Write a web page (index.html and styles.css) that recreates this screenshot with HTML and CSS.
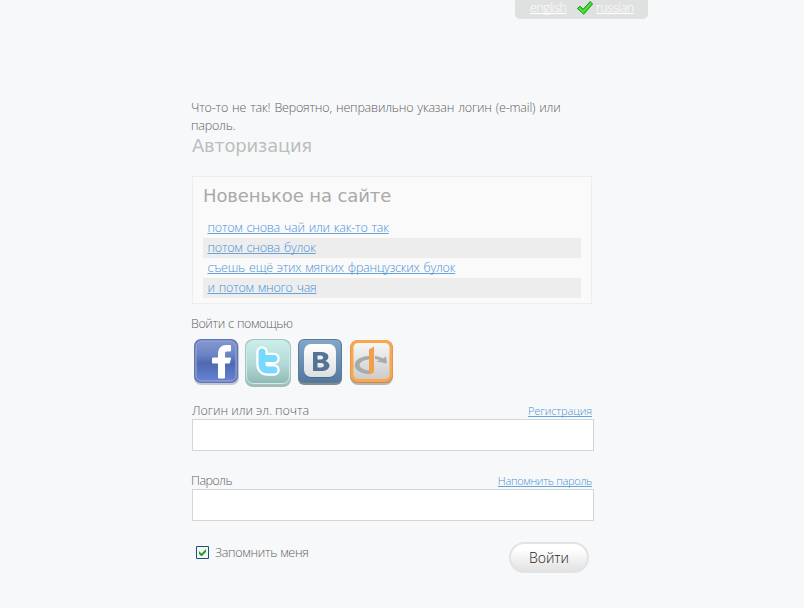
FILE: index.html
```html
<!DOCTYPE html>
<html lang="ru">
<head>
<meta charset="utf-8">
<title>Авторизация</title>
<link rel="stylesheet" href="styles.css">
</head>
<body>
<nav class="languages">
  <a href="#">english</a>
  <svg class="tick" width="18" height="16" viewBox="0 0 18 16"><path d="M1.3 8.5 4 6.2l3.2 3L14.2 1.5 16.6 4 7.8 14.2z" fill="#34d421" stroke="#279d28" stroke-width="1" stroke-linejoin="round"/><path d="M3 8.3l4.2 3.6L14.6 3.5" fill="none" stroke="#70ed4b" stroke-width="1"/></svg>
  <a href="#" class="russian">russian</a>
</nav>
<main class="login">
  <p class="message"><span class="message-line">Что-то не так! Вероятно, неправильно указан логин (e-mail) или</span> пароль.</p>
  <h1>Авторизация</h1>
  <section class="news">
    <h2>Новенькое на сайте</h2>
    <ul>
      <li><a href="#">потом снова чай или как-то так</a></li>
      <li><a href="#">потом снова булок</a></li>
      <li><a href="#">съешь ещё этих мягких французских булок</a></li>
      <li><a href="#">и потом много чая</a></li>
    </ul>
  </section>
  <p class="social-title"><span>Войти с помощью</span></p>
  <div class="social">
    <svg width="48" height="50" viewBox="0 0 48 50">
      <defs><linearGradient id="fb" x2="0" y2="1"><stop stop-color="#8297d0"/><stop offset=".35" stop-color="#6c83c4"/><stop offset=".55" stop-color="#4f68b1"/><stop offset="1" stop-color="#6583d2"/></linearGradient></defs>
      <rect x="2" y="3" width="45" height="45" rx="7" fill="#c4c8d2"/>
      <rect x="2" y="2" width="44" height="44" rx="7" fill="#6076b3"/>
      <rect x="4" y="4" width="40" height="40" rx="5.500" fill="url(#fb)" stroke="#a0b0dc"/>
      <path d="M26.500 41V26h-6v-5h6v-4c0-6 3-8.500 8-8.500h4V14h-3c-2 0-3 1-3 3v4h6l-1 5h-5v15z" fill="#fff" stroke="#fff"/>
    </svg>
    <svg width="48" height="50" viewBox="0 0 48 50">
      <defs><linearGradient id="tw" x2="0" y2="1"><stop stop-color="#cceeeb"/><stop offset=".55" stop-color="#b2d9d5"/><stop offset="1" stop-color="#91b9b4"/></linearGradient></defs>
      <rect x="1" y="4" width="46" height="46" rx="8" fill="#a6b8b8"/>
      <rect x="1" y="2" width="46" height="46" rx="8" fill="#a1c6c2"/>
      <rect x="2.5" y="3.5" width="43" height="43" rx="7" fill="url(#tw)" stroke="#d0ebe9"/>
      <path d="M18 15v12q0 6 6 6h6M18 21.500h12" fill="none" stroke="#fff" stroke-width="11.500" stroke-linecap="round" stroke-linejoin="round"/>
      <path d="M18 15v12q0 6 6 6h6M18 21.500h12" fill="none" stroke="#78d9ff" stroke-width="7" stroke-linecap="round" stroke-linejoin="round"/>
    </svg>
    <svg width="48" height="50" viewBox="0 0 48 50">
      <defs><linearGradient id="vk" x2="0" y2="1"><stop stop-color="#84a7c8"/><stop offset="1" stop-color="#53779e"/></linearGradient><linearGradient id="pale" x2="0" y2="1"><stop stop-color="#fff"/><stop offset="1" stop-color="#dedfe1"/></linearGradient></defs>
      <rect x="2" y="4" width="44" height="44" rx="6" fill="#858b92"/>
      <rect x="2" y="2" width="44" height="44" rx="6" fill="#5b7998"/>
      <rect x="3" y="3" width="42" height="42" rx="5" fill="url(#vk)"/>
      <rect x="8" y="8" width="32" height="33" rx="7" fill="#49698e"/>
      <rect x="8" y="7" width="32" height="33" rx="7" fill="url(#pale)"/>
      <path d="M17 15h8c9 0 9 7 4.500 9 6.500 2 5 10-3.500 10h-9zM21.500 18.500v4h3c3.500 0 3.500-4 0-4zM21.500 26v4.500h3.500c4 0 4-4.500 0-4.500z" fill="#537497" fill-rule="evenodd"/>
    </svg>
    <svg width="48" height="50" viewBox="0 0 48 50">
      <defs><linearGradient id="oid" x2="0" y2="1"><stop stop-color="#f8f8f8"/><stop offset="1" stop-color="#c9cac9"/></linearGradient></defs>
      <rect x="2" y="4" width="43" height="44" rx="8" fill="#b9b5af"/>
      <rect x="2" y="3" width="43" height="43" rx="8" fill="#c98b51"/>
      <rect x="4" y="4.500" width="39" height="39" rx="6" fill="url(#oid)" stroke="#f9a64e" stroke-width="3"/>
      <path d="M21 19C2 20 2 36 21 37v-3.500C8 32 9 23.500 21 22.500zM27 19q5 .5 8 2.500l3-2 1 7-11-2 4-1.500-5-1z" fill="#a8abab"/>
      <path d="M21 12.500l5-3v26l-5 2z" fill="#f49e4c"/>
    </svg>
  </div>
  <form>
    <div class="field">
      <div class="field-head"><label for="login" class="l1">Логин или эл. почта</label><a href="#" class="f1">Регистрация</a></div>
      <input id="login" type="text">
    </div>
    <div class="field">
      <div class="field-head"><label for="password" class="l2">Пароль</label><a href="#" class="f2">Напомнить пароль</a></div>
      <input id="password" type="password">
    </div>
    <div class="actions">
      <label class="remember"><svg width="13" height="13" viewBox="0 0 13 13"><path d="M.5.5h12v12H.5z" fill="#f5f6f3" stroke="#1c5180"/><path d="M3 5v3l2 2h1l4-4V3L5.500 7.500z" fill="#21a121"/></svg><span>Запомнить меня</span></label>
      <button type="button"><span>Войти</span></button>
    </div>
  </form>
</main>
</body>
</html>
```
FILE: styles.css
```css
* { box-sizing: border-box; }
body { margin: 0; height: 608px; overflow: hidden; background: #f7f8fa; color: #626262; font: 300 12.5px/18px "Open Sans", "Noto Sans", sans-serif; }
h1, h2, p, ul { margin: 0; padding: 0; }
a { color: #4a93d6; text-decoration: underline #69a5dc 1px; text-underline-offset: 1px; text-decoration-skip-ink: none; white-space: nowrap; }
.languages { width: 133px; height: 19px; margin-left: 515px; padding-left: 15px; display: flex; background: #dfe0e0; border-radius: 0 0 5px 5px; line-height: 16px; }
.languages a { color: #fff; text-decoration-color: #fff; width: 37px; letter-spacing: -.45px; }
.tick { margin: 0 2px 0 9px; flex: none; }
.login { width: 402px; margin: 80px 0 0 192px; }
.message { height: 36px; margin-left: -1px; white-space: nowrap; letter-spacing: -.2px; word-spacing: 1px; }
.message-line { display: block; }
h1, h2 { font: 18px/22px "DejaVu Sans", sans-serif; white-space: nowrap; }
h1 { height: 22px; color: #bcbebd; letter-spacing: -.28px; }
.news { width: 400px; height: 128px; margin-top: 19px; padding: 8px 10px 0; background: #fafafa; border: 1px solid #ededee; }
h2 { color: #a9a9a9; letter-spacing: -.1px; }
.news ul { list-style: none; margin-top: 11px; }
.news li { height: 20px; line-height: 20px; padding-left: 4.5px; letter-spacing: -.23px; word-spacing: 1px; }
.news li:nth-child(even) { background: #ededed; }
.social-title { height: 18px; margin: 11px 0 4px -1px; letter-spacing: -.4px; word-spacing: .5px; }
.social { display: flex; gap: 4px; height: 50px; }
form { margin-top: 15px; }
.field { height: 70px; }
.field-head { display: flex; justify-content: space-between; height: 17px; padding-right: 2px; }
.field-head a { font-size: 11px; line-height: 17px; }
.f1 { letter-spacing: -.1px; }
.f2 { letter-spacing: -.32px; }
.l1 { letter-spacing: -.05px; }
.l2 { letter-spacing: -.55px; margin-left: -1px; }
input { display: block; width: 402px; height: 32px; border: 1px solid #d4d5d6; background: #fff; padding: 4px 8px; }
.actions { display: flex; justify-content: space-between; padding: 0 5px 0 4px; }
.remember { display: flex; gap: 6px; margin-top: 2px; letter-spacing: -.28px; }
.remember svg { margin-top: 2px; }
button { width: 80px; height: 31px; padding: 0; border: 2px solid #e2e3e4; border-radius: 16px; background: linear-gradient(#fff 20%, #f0f0f0 60%, #e2e2e2); color: #222; font: 300 14px/27px "Open Sans", sans-serif; }
```
